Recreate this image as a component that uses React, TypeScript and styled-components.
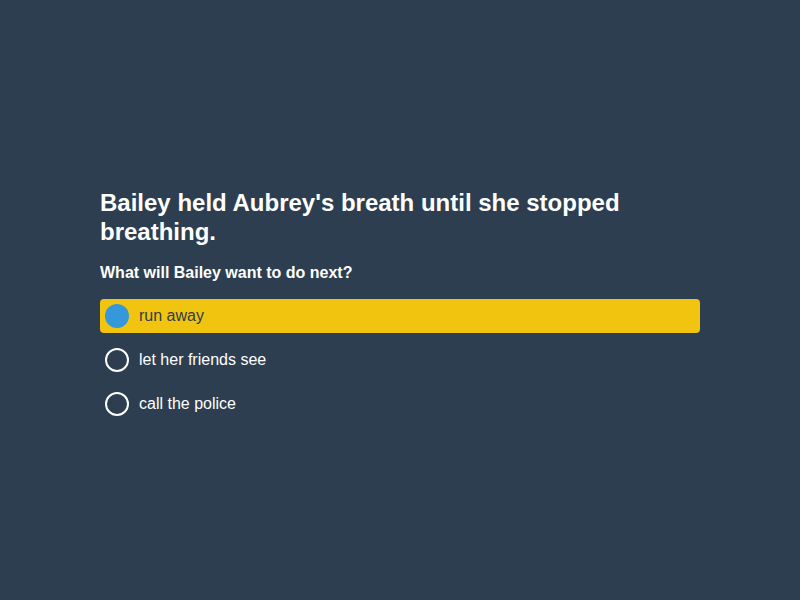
import React, { useState } from "react";
import styled, { createGlobalStyle } from "styled-components";

const Global = createGlobalStyle`
  html, body { margin: 0; padding: 0; background: #2c3e50; }
  body { font-family: "Liberation Sans", Arial, sans-serif; color: #ffffff; }
`;

const Page = styled.div`
  box-sizing: border-box;
  min-height: 100vh;
  padding-top: 9px;
  display: flex;
  align-items: center;
  justify-content: center;
`;

const Card = styled.div`
  width: 600px;
  display: flex;
  flex-direction: column;
`;

const Title = styled.h1`
  margin: 0 0 17px;
  font-size: 24px;
  line-height: 29px;
  font-weight: 700;
`;

const Question = styled.h2`
  margin: 0 0 16px;
  font-size: 16px;
  line-height: 20px;
  font-weight: 700;
`;

const Options = styled.div`
  display: flex;
  flex-direction: column;
  gap: 10px;
`;

const Option = styled.div<{ $selected: boolean }>`
  display: flex;
  align-items: center;
  gap: 10px;
  height: 34px;
  padding: 0 5px;
  border-radius: 4px;
  cursor: pointer;
  background: ${(p) => (p.$selected ? "#f1c40f" : "transparent")};
  color: ${(p) => (p.$selected ? "#2c3e50" : "#ffffff")};
  font-size: 16px;
`;

const Radio = styled.span<{ $selected: boolean }>`
  box-sizing: border-box;
  width: 24px;
  height: 24px;
  border-radius: 50%;
  flex-shrink: 0;
  border: ${(p) => (p.$selected ? "none" : "2px solid #ffffff")};
  background: ${(p) => (p.$selected ? "#3498db" : "transparent")};
`;

const options = ["run away", "let her friends see", "call the police"];

export default function App() {
  const [selected, setSelected] = useState(0);
  return (
    <>
      <Global />
      <Page>
        <Card>
          <Title>Bailey held Aubrey's breath until she stopped breathing.</Title>
          <Question>What will Bailey want to do next?</Question>
          <Options>
            {options.map((o, i) => (
              <Option key={o} $selected={selected === i} onClick={() => setSelected(i)}>
                <Radio $selected={selected === i} />
                {o}
              </Option>
            ))}
          </Options>
        </Card>
      </Page>
    </>
  );
}
